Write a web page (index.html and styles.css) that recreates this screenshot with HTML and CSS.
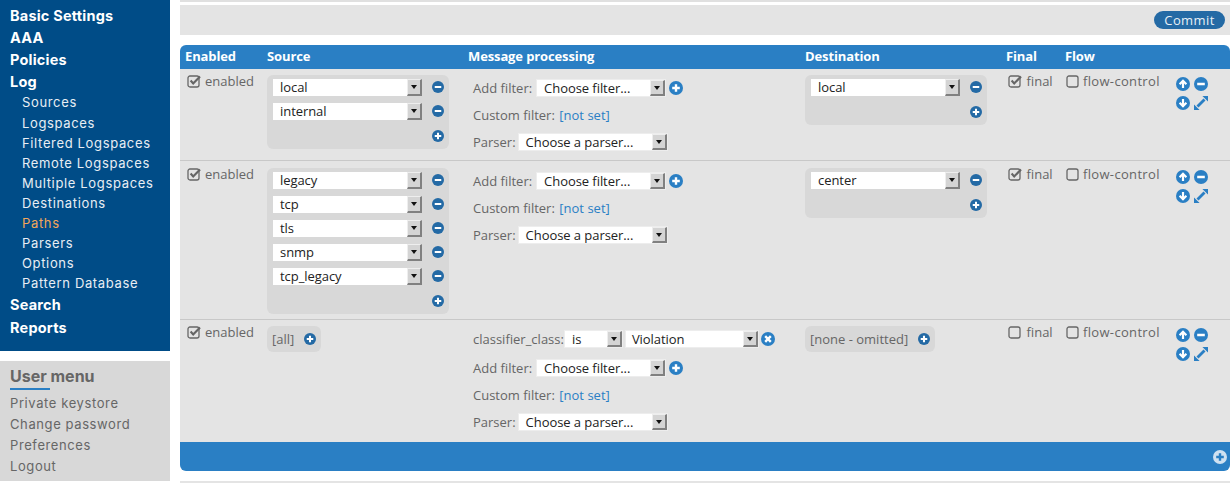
FILE: index.html
```html
<!DOCTYPE html>
<html lang="en">
<head>
<meta charset="utf-8">
<title>Paths</title>
<link rel="stylesheet" href="styles.css">
</head>
<body>
<svg class="defs" width="0" height="0" aria-hidden="true">
  <symbol id="plus" viewBox="0 0 14 14"><circle cx="7" cy="7" r="7" fill="currentColor"/><path d="M7 3.2v7.6M3.2 7h7.6" stroke="var(--glyph,#fff)" stroke-width="2.4"/></symbol>
  <symbol id="minus" viewBox="0 0 14 14"><circle cx="7" cy="7" r="7" fill="currentColor"/><path d="M3.2 7h7.6" stroke="#fff" stroke-width="2.4"/></symbol>
  <symbol id="cross" viewBox="0 0 14 14"><circle cx="7" cy="7" r="7" fill="currentColor"/><path d="M4.2 4.2l5.6 5.6M9.8 4.2l-5.6 5.6" stroke="#fff" stroke-width="2.4"/></symbol>
  <symbol id="up" viewBox="0 0 14 14"><circle cx="7" cy="7" r="7" fill="currentColor"/><path d="M7 11V4M3.6 7.2L7 3.8l3.4 3.4" stroke="#fff" stroke-width="2.2" fill="none"/></symbol>
  <symbol id="down" viewBox="0 0 14 14"><circle cx="7" cy="7" r="7" fill="currentColor"/><path d="M7 3v7M3.6 6.8L7 10.2l3.4-3.4" stroke="#fff" stroke-width="2.2" fill="none"/></symbol>
  <symbol id="expand" viewBox="0 0 14 14"><path d="M3.5 10.5l7-7" stroke="currentColor" stroke-width="2.8"/><path d="M8.4 0H14V5.6zM0 8.4V14H5.6z" fill="currentColor"/></symbol>
  <symbol id="checked" viewBox="0 0 14 14"><rect x="1" y="2" width="11" height="11" rx="2" fill="none" stroke="#666" stroke-width="1.3"/><path d="M3.6 6.6l2.6 2.8L13 2.4" fill="none" stroke="#666" stroke-width="2.2"/></symbol>
  <symbol id="unchecked" viewBox="0 0 14 14"><rect x="1" y="2" width="11" height="11" rx="2" fill="none" stroke="#666" stroke-width="1.3"/></symbol>
</svg>
<div class="page">
  <aside class="side">
    <nav class="nav">
      <a class="top">Basic Settings</a>
      <a class="top">AAA</a>
      <a class="top">Policies</a>
      <a class="top">Log</a>
      <a class="sub">Sources</a>
      <a class="sub">Logspaces</a>
      <a class="sub">Filtered Logspaces</a>
      <a class="sub">Remote Logspaces</a>
      <a class="sub">Multiple Logspaces</a>
      <a class="sub">Destinations</a>
      <a class="sub cur">Paths</a>
      <a class="sub">Parsers</a>
      <a class="sub">Options</a>
      <a class="sub">Pattern Database</a>
      <a class="top">Search</a>
      <a class="top">Reports</a>
    </nav>
    <div class="user">
      <h3>User menu</h3>
      <a>Private keystore</a>
      <a>Change password</a>
      <a>Preferences</a>
      <a>Logout</a>
    </div>
  </aside>
  <main class="main">
    <div class="bar"><button class="commit">Commit</button></div>
    <section class="tbl">
      <div class="grid head">
        <div>Enabled</div><div>Source</div><div>Message processing</div><div>Destination</div><div>Final</div><div>Flow</div><div></div>
      </div>

      <div class="grid row r1">
        <label class="chk"><svg class="cb"><use href="#checked"/></svg>enabled</label>
        <div class="box src">
          <div class="line"><div class="sel wide"><span>local</span><i></i></div><svg class="ic dk"><use href="#minus"/></svg></div>
          <div class="line"><div class="sel wide"><span>internal</span><i></i></div><svg class="ic dk"><use href="#minus"/></svg></div>
          <div class="line end"><svg class="ic dk"><use href="#plus"/></svg></div>
        </div>
        <div class="mp">
          <div class="f"><span>Add filter:</span><div class="sel flt"><span>Choose filter...</span><i></i></div><svg class="ic big"><use href="#plus"/></svg></div>
          <div class="f"><span>Custom filter:</span><a class="lnk">[not set]</a></div>
          <div class="f"><span>Parser:</span><div class="sel prs"><span>Choose a parser...</span><i></i></div></div>
        </div>
        <div class="box src dst">
          <div class="line"><div class="sel wide"><span>local</span><i></i></div><svg class="ic dk"><use href="#minus"/></svg></div>
          <div class="line end"><svg class="ic dk"><use href="#plus"/></svg></div>
        </div>
        <label class="chk fin"><svg class="cb"><use href="#checked"/></svg>final</label>
        <label class="chk flw"><svg class="cb"><use href="#unchecked"/></svg>flow-control</label>
        <div class="acts"><svg class="ic big"><use href="#up"/></svg><svg class="ic big"><use href="#minus"/></svg><svg class="ic big"><use href="#down"/></svg><svg class="ic big"><use href="#expand"/></svg></div>
      </div>

      <div class="grid row r2">
        <label class="chk"><svg class="cb"><use href="#checked"/></svg>enabled</label>
        <div class="box src">
          <div class="line"><div class="sel wide"><span>legacy</span><i></i></div><svg class="ic dk"><use href="#minus"/></svg></div>
          <div class="line"><div class="sel wide"><span>tcp</span><i></i></div><svg class="ic dk"><use href="#minus"/></svg></div>
          <div class="line"><div class="sel wide"><span>tls</span><i></i></div><svg class="ic dk"><use href="#minus"/></svg></div>
          <div class="line"><div class="sel wide"><span>snmp</span><i></i></div><svg class="ic dk"><use href="#minus"/></svg></div>
          <div class="line"><div class="sel wide"><span>tcp_legacy</span><i></i></div><svg class="ic dk"><use href="#minus"/></svg></div>
          <div class="line end"><svg class="ic dk"><use href="#plus"/></svg></div>
        </div>
        <div class="mp">
          <div class="f"><span>Add filter:</span><div class="sel flt"><span>Choose filter...</span><i></i></div><svg class="ic big"><use href="#plus"/></svg></div>
          <div class="f"><span>Custom filter:</span><a class="lnk">[not set]</a></div>
          <div class="f"><span>Parser:</span><div class="sel prs"><span>Choose a parser...</span><i></i></div></div>
        </div>
        <div class="box src dst">
          <div class="line"><div class="sel wide"><span>center</span><i></i></div><svg class="ic dk"><use href="#minus"/></svg></div>
          <div class="line end"><svg class="ic dk"><use href="#plus"/></svg></div>
        </div>
        <label class="chk fin"><svg class="cb"><use href="#checked"/></svg>final</label>
        <label class="chk flw"><svg class="cb"><use href="#unchecked"/></svg>flow-control</label>
        <div class="acts"><svg class="ic big"><use href="#up"/></svg><svg class="ic big"><use href="#minus"/></svg><svg class="ic big"><use href="#down"/></svg><svg class="ic big"><use href="#expand"/></svg></div>
      </div>

      <div class="grid row r3">
        <label class="chk"><svg class="cb"><use href="#checked"/></svg>enabled</label>
        <div><div class="box pill"><span>[all]</span><svg class="ic dk"><use href="#plus"/></svg></div></div>
        <div class="mp">
          <div class="f cls"><span>classifier_class:</span><div class="sel is"><span>is</span><i></i></div><div class="sel vio"><span>Violation</span><i></i></div><svg class="ic big"><use href="#cross"/></svg></div>
          <div class="f"><span>Add filter:</span><div class="sel flt"><span>Choose filter...</span><i></i></div><svg class="ic big"><use href="#plus"/></svg></div>
          <div class="f"><span>Custom filter:</span><a class="lnk">[not set]</a></div>
          <div class="f"><span>Parser:</span><div class="sel prs"><span>Choose a parser...</span><i></i></div></div>
        </div>
        <div><div class="box pill"><span>[none - omitted]</span><svg class="ic dk"><use href="#plus"/></svg></div></div>
        <label class="chk fin"><svg class="cb"><use href="#unchecked"/></svg>final</label>
        <label class="chk flw"><svg class="cb"><use href="#unchecked"/></svg>flow-control</label>
        <div class="acts"><svg class="ic big"><use href="#up"/></svg><svg class="ic big"><use href="#minus"/></svg><svg class="ic big"><use href="#down"/></svg><svg class="ic big"><use href="#expand"/></svg></div>
      </div>

      <div class="foot"><svg class="ic big lt"><use href="#plus"/></svg></div>
    </section>
    <div class="rule"></div>
  </main>
</div>
</body>
</html>
```

FILE: styles.css
```css
* { box-sizing: border-box; }
html, body { margin: 0; height: 483px; overflow: hidden; background: #fff; }
body { font-family: "Open Sans", "Noto Sans", sans-serif; font-size: 13px; color: #666; }
.defs { position: absolute; }
.page { display: flex; gap: 10px; height: 483px; }

.side { width: 170px; flex: none; display: flex; flex-direction: column; gap: 10px; font-family: Inter, "Open Sans", sans-serif; }
.nav { height: 351px; background: #004c87; color: #fff; padding: 5px 0 0 10px; display: flex; flex-direction: column; }
.nav a { display: block; white-space: nowrap; }
.top { font-size: 14.5px; font-weight: 700; line-height: 22px; letter-spacing: .2px; }
.sub { font-size: 13px; line-height: 20px; padding-left: 12px; color: #e8eef4; letter-spacing: .65px; }
.top + .sub { margin-top: -1px; }
.sub:nth-child(6) { margin-top: 1px; }
.sub + .top { margin-top: 1px; }
.nav .top:last-child { margin-top: 1px; }
.nav .cur { color: #f2a65a; }

.user { height: 120px; background: #d8d8d8; padding: 4px 0 0 10px; }
.user h3 { margin: 0 0 3px; font-size: 16px; font-weight: 700; line-height: 22px; color: #666; }
.user h3::after { content: ""; display: block; width: 40px; height: 2px; margin-top: 1px; background: #2a7fc4; }
.user a { display: block; font-size: 13px; line-height: 21px; color: #666; letter-spacing: .6px; white-space: nowrap; }

.main { flex: 1; min-width: 0; padding-top: 5px; box-shadow: inset 0 2px 0 #e0e0e0; }
.bar { height: 30px; background: #e4e4e4; display: flex; justify-content: flex-end; padding: 6px 5px 0 0; margin-bottom: 10px; }
.commit { width: 71px; height: 18px; padding: 0; border: 0; border-radius: 9px; background: #246aa5; color: #e8f0f6; font: 13px/18px "Open Sans", sans-serif; letter-spacing: .4px; }

.tbl { border-radius: 6px; overflow: hidden; }
.grid { display: grid; grid-template-columns: 82px 201px 337px 201px 59px 105px 65px; }
.head { height: 24px; background: #2a7fc4; color: #fff; font-weight: 700; font-size: 13px; line-height: 23px; letter-spacing: -.12px; }
.head > div { padding-left: 5px; }
.row { background: #e4e4e4; border-bottom: 1px solid #c8c8c8; align-items: start; }
.r1 { height: 92px; padding-top: 6px; }
.r2 { height: 159px; padding-top: 7px; }
.r3 { height: 122px; padding-top: 6px; border-bottom: 0; }

.chk { display: flex; align-items: center; gap: 4px; height: 16px; margin-top: -2px; padding-left: 7px; white-space: nowrap; line-height: 16px; font-size: 13px; }
.fin { gap: 4.5px; }
.flw { padding-left: 6px; gap: 3px; letter-spacing: .33px; }
.cb { width: 14px; height: 14px; flex: none; }
.ic { width: 12px; height: 12px; flex: none; color: #2a7fc4; display: block; }
.ic.big { width: 14px; height: 14px; }
.ic.dk { color: #246aa5; }
.ic.lt { color: #cfe1f1; --glyph: #2a7fc4; }

.box { background: #d8d8d8; border-radius: 6px; margin-left: 5px; }
.src { width: 182px; padding: 0 6px 6px; }
.line { display: flex; align-items: center; justify-content: space-between; height: 24px; }
.line.end { justify-content: flex-end; height: 25px; }
.line .ic { margin-right: -1px; }
.r1 .src { height: 74px; }
.r2 .src { height: 146px; }
.r1 .dst, .r2 .dst { height: 50px; }

.sel { display: flex; height: 18px; background: #fff; color: #222; font-size: 13px; line-height: 17px; letter-spacing: -.06px; border: 1px solid #ededed; }
.sel span { flex: 1; padding-left: 7px; white-space: nowrap; overflow: hidden; }
.sel i { width: 15px; flex: none; position: relative; background: #d4d4d4; border-style: solid; border-width: 1px 2px 2px 1px; border-color: #eee #808080 #808080 #eee; }
.sel i::after { content: ""; position: absolute; left: 3px; top: 5px; border: 3px solid transparent; border-top: 4px solid #111; border-bottom: 0; }
.sel.wide { width: 149px; height: 17px; border: 0; line-height: 16px; }
.flt { width: 130px; margin: 0 3px 0 4px; }
.prs { width: 150px; margin-left: 2px; }
.is { width: 59px; }
.vio { width: 134px; margin: 0 2px; }
.vio span { padding-left: 6px; }

.mp { margin-top: -1px; padding-left: 10px; display: flex; flex-direction: column; }
.f { display: flex; align-items: center; height: 27px; white-space: nowrap; line-height: 18px; }
.r3 .mp { margin-top: -2px; }
.r3 .f.cls { height: 30px; }
.lnk { color: #2a7fc4; margin-left: 4.5px; }

.pill { display: inline-flex; align-items: center; gap: 10px; height: 26px; padding: 0 5px; }
.acts { display: grid; grid-template-columns: 14px 14px; gap: 5px 4px; padding-left: 11px; margin-top: 2px; }

.foot { height: 29px; background: #2a7fc4; display: flex; align-items: center; justify-content: flex-end; padding-right: 3px; }
.rule { height: 2px; margin-top: 10px; background: #e4e4e4; }
```
